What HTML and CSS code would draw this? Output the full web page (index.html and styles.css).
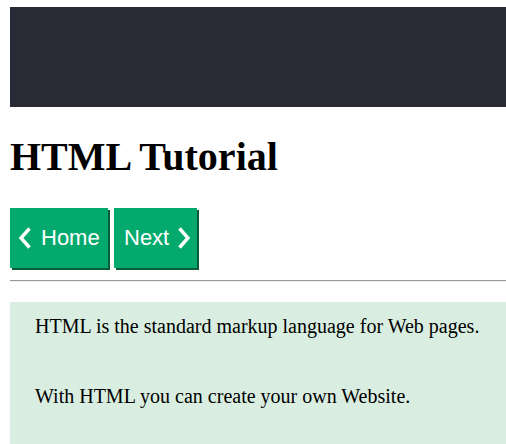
FILE: index.html
```html
<!DOCTYPE html>
<html>
<head>
<meta charset="utf-8">
<link rel="stylesheet" href="styles.css">
</head>
<body>
<div class="topbar"></div>
<h1 class="title">HTML Tutorial</h1>
<div class="nav">
  <a class="btn btn-prev" href="#"><svg class="chev" width="14" height="22" viewBox="0 0 14 22"><polyline points="11.5,1.5 3,11 11.5,20.5" fill="none" stroke="#fff" stroke-width="3.4"/></svg><span>Home</span></a>
  <a class="btn btn-next" href="#"><span>Next</span><svg class="chev" width="14" height="22" viewBox="0 0 14 22"><polyline points="2.5,1.5 11,11 2.5,20.5" fill="none" stroke="#fff" stroke-width="3.4"/></svg></a>
</div>
<hr class="rule">
<div class="note">
  <p>HTML is the standard markup language for Web pages.</p>
  <p>With HTML you can create your own Website.</p>
</div>
</body>
</html>
```
FILE: styles.css
```css
html, body {
  margin: 0;
  padding: 0;
  background: #fff;
}
body {
  padding: 7px 0 0 10px;
  font-family: "Liberation Serif", "Times New Roman", serif;
  color: #000;
}
.topbar {
  height: 100px;
  background: #282a35;
}
.title {
  margin: 28px 0 0 0;
  font-size: 40px;
  font-weight: bold;
  line-height: 43px;
}
.nav {
  display: flex;
  gap: 6px;
  margin-top: 30px;
}
.btn {
  display: flex;
  align-items: center;
  height: 60px;
  background: #04aa6d;
  color: #fff;
  text-decoration: none;
  font-family: "Liberation Sans", Arial, sans-serif;
  font-size: 22px;
  box-shadow: 2px 2px 0 #0b5a3c;
  margin-bottom: 2px;
}
.btn-prev {
  width: 98px;
  box-sizing: border-box;
  padding: 0 0 0 8px;
  gap: 9px;
}
.btn-next {
  width: 83px;
  box-sizing: border-box;
  padding: 0 0 0 10px;
  gap: 8px;
}
.chev {
  display: block;
}
.rule {
  margin: 10px 0 0 0;
  border: 0;
  border-top: 1px solid #9a9a9a;
  border-bottom: 1px solid #eee;
  height: 0;
}
.note {
  margin-top: 20px;
  background: #d9eee1;
  padding: 11px 25px 45px 25px;
  display: flex;
  flex-direction: column;
  gap: 43px;
}
.note p {
  margin: 0;
  font-size: 20px;
  line-height: 27px;
}
```
